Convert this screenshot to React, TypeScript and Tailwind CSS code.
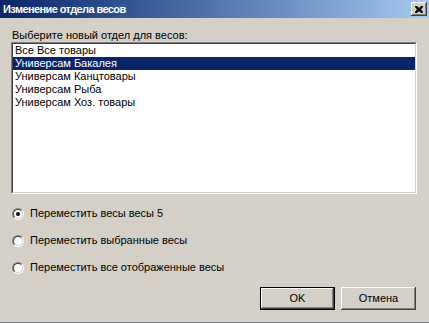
import { useState } from 'react';

const departments = [
    'Все Все товары',
    'Универсам Бакалея',
    'Универсам Канцтовары',
    'Универсам Рыба',
    'Универсам Хоз. товары',
];

const options = [
    'Переместить весы весы 5',
    'Переместить выбранные весы',
    'Переместить все отображенные весы',
];

const raised =
    'shadow-[inset_-1px_-1px_#404040,inset_1px_1px_#ffffff,inset_-2px_-2px_#808080,inset_2px_2px_#d4d0c8]';

function Radio({ checked }: { checked: boolean }) {
    return (
        <span className="w-[12px] h-[12px] rounded-full border border-t-[#808080] border-l-[#808080] border-b-white border-r-white flex">
            <span className="flex-1 rounded-full border border-t-[#404040] border-l-[#404040] border-b-[#d4d0c8] border-r-[#d4d0c8] bg-white flex items-center justify-center">
                {checked && <span className="w-[4px] h-[4px] rounded-full bg-black" />}
            </span>
        </span>
    );
}

export default function App() {
    const [selected, setSelected] = useState(1);
    const [mode, setMode] = useState(0);

    return (
        <div className="w-[429px] h-[323px] bg-[#d4d0c8] flex flex-col font-['Liberation_Sans',Arial,sans-serif] text-[11px] leading-[13px] text-black select-none">
            <div className="h-[18px] flex items-center justify-between pl-[3px] pr-[2px] bg-gradient-to-r from-[#0a246a] to-[#a6caf0]">
                <span className="text-white font-bold tracking-[-0.6px]">Изменение отдела весов</span>
                <button className={`w-[16px] h-[14px] bg-[#d4d0c8] flex items-center justify-center ${raised}`}>
                    <svg width="8" height="7" viewBox="0 0 8 7">
                        <path d="M0 0h2l2 2 2-2h2v1l-2 2.5 2 2.5v1h-2l-2-2-2 2h-2v-1l2-2.5-2-2.5z" fill="#000" />
                    </svg>
                </button>
            </div>

            <div className="flex flex-col pl-[11px] pr-[12px] pt-[11px]">
                <label className="pl-[1px]">Выберите новый отдел для весов:</label>
                <div className="h-[152px] border border-t-[#808080] border-l-[#808080] border-b-white border-r-white">
                    <div className="h-full bg-white border border-t-[#404040] border-l-[#404040] border-b-[#d4d0c8] border-r-[#d4d0c8]">
                        {departments.map((d, i) => (
                            <div
                                key={d}
                                onClick={() => setSelected(i)}
                                className={`h-[13px] pl-[2px] whitespace-nowrap ${i === selected ? 'bg-[#0a246a] text-white' : ''}`}
                            >
                                {d}
                            </div>
                        ))}
                    </div>
                </div>

                <div className="flex flex-col gap-[14px] mt-[13px] pl-[1px]">
                    {options.map((o, i) => (
                        <div key={o} onClick={() => setMode(i)} className="flex items-center gap-[6px] h-[13px]">
                            <Radio checked={mode === i} />
                            <span>{o}</span>
                        </div>
                    ))}
                </div>

                <div className="flex justify-end gap-[6px] mt-[13px] pr-[1px]">
                    <button className="w-[75px] h-[23px] border border-black bg-[#d4d0c8] flex">
                        <span className={`flex-1 flex items-center justify-center ${raised}`}>OK</span>
                    </button>
                    <button className={`w-[75px] h-[23px] bg-[#d4d0c8] flex items-center justify-center ${raised}`}>
                        Отмена
                    </button>
                </div>
            </div>

            <div className="flex-1" />
            <div className="h-[1px] bg-[#808080]" />
        </div>
    );
}
